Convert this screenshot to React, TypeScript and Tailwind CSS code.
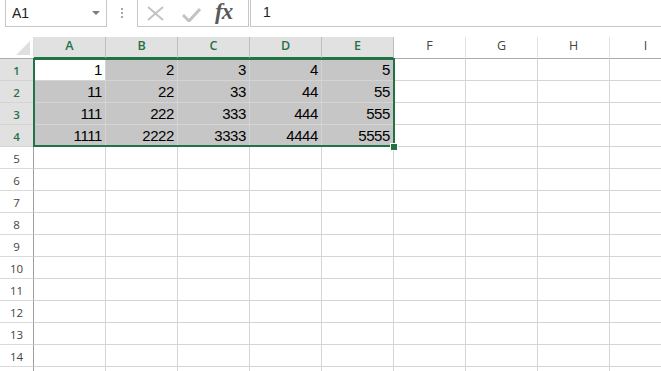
import React from 'react';

const COLS = ['A', 'B', 'C', 'D', 'E', 'F', 'G', 'H', 'I'];
const DATA: number[][] = [
  [1, 2, 3, 4, 5],
  [11, 22, 33, 44, 55],
  [111, 222, 333, 444, 555],
  [1111, 2222, 3333, 4444, 5555],
];
const ROWS = Array.from({ length: 14 }, (_, i) => i + 1);

const uiFont = { fontFamily: '"Open Sans", "Noto Sans", sans-serif' };
const cellFont = { fontFamily: '"Liberation Sans", Arial, sans-serif' };

const FormulaBar: React.FC = () => (
  <div className="flex h-[27px] overflow-hidden" style={uiFont}>
    <div className="ml-[5px] -mt-px h-[28px] w-[102px] shrink-0 border border-[#c6c6c6] flex items-center pl-[6px] pr-[6px]">
      <span className="text-[14px] text-[#222] leading-none" style={cellFont}>A1</span>
      <svg className="ml-auto" width="8" height="4" viewBox="0 0 8 4">
        <path d="M0 0 L8 0 L4 4 Z" fill="#7a7a7a" />
      </svg>
    </div>
    <div className="w-[30px] shrink-0 flex flex-col items-center justify-center gap-[2px] pb-px">
      <span className="w-[2px] h-[2px] bg-[#a6a6a6]" />
      <span className="w-[2px] h-[2px] bg-[#a6a6a6]" />
      <span className="w-[2px] h-[2px] bg-[#a6a6a6]" />
    </div>
    <div className="-mt-px h-[28px] w-[112px] shrink-0 border border-[#c6c6c6] flex items-center">
      <svg className="ml-[9px]" width="17" height="15" viewBox="0 0 17 15">
        <path d="M1 1 L16 14 M16 1 L1 14" stroke="#c3c3c3" strokeWidth="2" fill="none" />
      </svg>
      <svg className="ml-[18px] mt-[4px]" width="19" height="14" viewBox="0 0 19 14">
        <path d="M1 7 L7 13 L18 1" stroke="#c3c3c3" strokeWidth="3" fill="none" />
      </svg>
      <span
        className="ml-[14px] -mt-[3px] text-[23px] italic font-bold tracking-[-1px] text-[#5a5a5a] leading-none"
        style={{ fontFamily: '"Liberation Serif", "Times New Roman", serif' }}
      >
        fx
      </span>
    </div>
    <div className="ml-px -mt-px h-[28px] flex-1 border-l border-b border-[#c6c6c6] flex items-center pl-[12px]">
      <span className="text-[14px] text-[#222]" style={cellFont}>1</span>
    </div>
  </div>
);

const HeaderRow: React.FC = () => (
  <div className="flex h-[22px]" style={uiFont}>
    <div className="relative w-[34px] h-[22px] shrink-0 border-r border-b border-r-[#dcdcdc] border-b-[#ababab] bg-white">
      <svg className="absolute right-[3px] bottom-[3px]" width="14" height="14" viewBox="0 0 14 14">
        <path d="M14 0 L14 14 L0 14 Z" fill="#dfdfdf" />
      </svg>
    </div>
    {COLS.map((c, i) => {
      const sel = i < 5;
      return (
        <div
          key={c}
          className={
            sel
              ? 'w-[72px] h-[22px] shrink-0 border-r border-r-[#bdbdbd] border-b-2 border-b-[#217346] bg-[#e1e1e1] text-[#217346] font-semibold flex items-center justify-center text-[12.5px] pb-[1px]'
              : 'w-[72px] h-[22px] shrink-0 border-r border-r-[#e1e1e1] border-b border-b-[#ababab] bg-white text-[#444] flex items-center justify-center text-[12.5px] pb-[2px]'
          }
        >
          {c}
        </div>
      );
    })}
  </div>
);

const Row: React.FC<{ n: number }> = ({ n }) => {
  const sel = n <= 4;
  const vals = DATA[n - 1];
  return (
    <div className="flex h-[22px]">
      <div
        className={
          sel
            ? 'w-[34px] h-[22px] shrink-0 border-r border-r-[#ababab] border-b border-b-[#d4d4d4] bg-[#e1e1e1] text-[#217346] font-semibold flex items-center justify-center text-[11.5px] pt-[2px]'
            : 'w-[34px] h-[22px] shrink-0 border-r border-r-[#9f9f9f] border-b border-b-[#dadada] bg-white text-[#444] flex items-center justify-center text-[11.5px] pt-[2px]'
        }
        style={uiFont}
      >
        {n}
      </div>
      {COLS.map((c, i) => {
        const inRange = sel && i < 5;
        const active = n === 1 && i === 0;
        return (
          <div
            key={c}
            className={
              'w-[72px] h-[22px] shrink-0 border-r border-b border-[#d4d4d4] text-right pr-[3px] text-[15px] tracking-[-0.4px] leading-[22px] text-black ' +
              (inRange && !active ? 'bg-[#c6c6c6]' : 'bg-white')
            }
            style={cellFont}
          >
            {inRange ? vals[i] : ''}
          </div>
        );
      })}
    </div>
  );
};

export default function App() {
  return (
    <div className="w-[661px] h-[371px] overflow-hidden bg-white">
      <FormulaBar />
      <div className="h-[10px]" />
      <div className="relative">
        <HeaderRow />
        {ROWS.map((n) => (
          <Row key={n} n={n} />
        ))}
        {/* row 15, only its top edge is in view */}
        <div className="flex h-[22px]">
          <div className="w-[34px] h-[22px] shrink-0 border-r border-r-[#9f9f9f] bg-white" />
          {COLS.map((c) => (
            <div key={c} className="w-[72px] h-[22px] shrink-0 border-r border-[#d4d4d4] bg-white" />
          ))}
        </div>
        {/* selection outline */}
        <div className="absolute left-[33px] top-[21px] w-[362px] h-[89px] border-2 border-[#217346] pointer-events-none" />
        <div className="absolute left-[390px] top-[106px] w-[8px] h-[8px] bg-[#217346] border border-white" />
      </div>
    </div>
  );
}
